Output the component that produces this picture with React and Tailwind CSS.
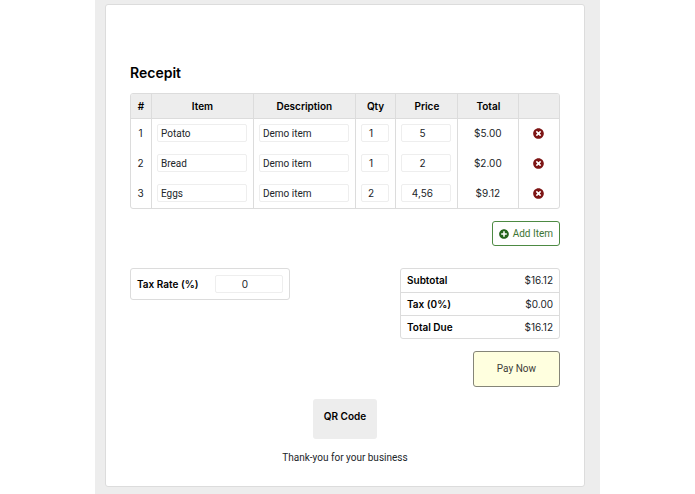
import React, { useState } from "react";
import { FaPlusCircle, FaTimesCircle } from "react-icons/fa";

const initialItems = [
  { id: 1, name: "Potato", description: "Demo item", qty: "1", price: "5" },
  { id: 2, name: "Bread", description: "Demo item", qty: "1", price: "2" },
  { id: 3, name: "Eggs", description: "Demo item", qty: "2", price: "4,56" },
];

const toNumber = (value) => Number(String(value).replace(",", ".")) || 0;
const lineTotal = (item) => toNumber(item.qty) * toNumber(item.price);
const money = (value) => `$${value.toFixed(2)}`;

const Field = ({ className = "", ...props }) => (
  <input
    type="text"
    className={`block h-[18px] w-full min-w-0 rounded-xs border border-[#eeeeee] bg-white text-[#212529] outline-none focus:border-gray-400 ${className}`}
    {...props}
  />
);

const App = () => {
  const [items, setItems] = useState(initialItems);
  const [taxRate, setTaxRate] = useState("0");

  const subtotal = items.reduce((sum, item) => sum + lineTotal(item), 0);
  const tax = (subtotal * toNumber(taxRate)) / 100;

  const summary = [
    { label: "Subtotal", value: subtotal },
    { label: `Tax (${toNumber(taxRate)}%)`, value: tax },
    { label: "Total Due", value: subtotal + tax },
  ];

  const updateItem = (id, key, value) => {
    setItems((prev) =>
      prev.map((item) => (item.id === id ? { ...item, [key]: value } : item))
    );
  };

  const removeItem = (id) => {
    setItems((prev) => prev.filter((item) => item.id !== id));
  };

  const addItem = () => {
    setItems((prev) => [
      ...prev,
      { id: Date.now(), name: "", description: "", qty: "1", price: "0" },
    ]);
  };

  return (
    <div className="min-h-screen bg-white font-['Inter',sans-serif] text-[10px] leading-4 text-[#212529]">
      <div className="mx-auto min-h-screen max-w-[505px] bg-[#ededed] pt-1 pr-[15px] pb-[6px] pl-[10px]">
        <main className="rounded-[3px] border border-[#dcdcdc] bg-white px-6 pt-[58px] pb-5">
          <h1 className="mb-[10px] text-sm leading-5 font-semibold text-black">Recepit</h1>

          <div className="overflow-hidden rounded-[3px] border border-[#dcdcdc]">
            <table className="w-full table-fixed border-collapse text-center">
              <thead className="bg-[#ededed] text-black">
                <tr className="h-6 border-b border-[#dcdcdc] [&>th]:font-semibold [&>th+th]:border-l [&>th+th]:border-[#dcdcdc]">
                  <th className="w-[4.8%]">#</th>
                  <th className="w-[23.8%]">Item</th>
                  <th className="w-[23.8%]">Description</th>
                  <th className="w-[9.5%]">Qty</th>
                  <th className="w-[14.5%]">Price</th>
                  <th className="w-[14.2%]">Total</th>
                  <th aria-label="Remove" />
                </tr>
              </thead>
              <tbody>
                {items.map((item, index) => (
                  <tr
                    key={item.id}
                    className="h-[30px] [&>td]:pr-[6px] [&>td]:pl-[5px] [&>td+td]:border-l [&>td+td]:border-[#dcdcdc]"
                  >
                    <td>{index + 1}</td>
                    <td>
                      <Field
                        aria-label="Item"
                        className="px-[3px] font-['Roboto',sans-serif]"
                        value={item.name}
                        onChange={(e) => updateItem(item.id, "name", e.target.value)}
                      />
                    </td>
                    <td>
                      <Field
                        aria-label="Description"
                        className="px-[3px] font-['Roboto',sans-serif]"
                        value={item.description}
                        onChange={(e) => updateItem(item.id, "description", e.target.value)}
                      />
                    </td>
                    <td>
                      <Field
                        aria-label="Qty"
                        className="pr-2 text-center"
                        value={item.qty}
                        onChange={(e) => updateItem(item.id, "qty", e.target.value)}
                      />
                    </td>
                    <td>
                      <Field
                        aria-label="Price"
                        className="pr-2 text-center"
                        value={item.price}
                        onChange={(e) => updateItem(item.id, "price", e.target.value)}
                      />
                    </td>
                    <td>{money(lineTotal(item))}</td>
                    <td>
                      <button
                        type="button"
                        aria-label="Remove item"
                        className="mx-auto block cursor-pointer text-[#7d1515]"
                        onClick={() => removeItem(item.id)}
                      >
                        <FaTimesCircle size={11} />
                      </button>
                    </td>
                  </tr>
                ))}
              </tbody>
            </table>
          </div>

          <div className="mt-3 flex justify-end">
            <button
              type="button"
              className="flex h-[25px] cursor-pointer items-center gap-1 rounded-[3px] border border-[#4d8a43] px-[6px] font-['Roboto',sans-serif] text-[#3d7434]"
              onClick={addItem}
            >
              <FaPlusCircle size={10} className="text-[#24631b]" />
              Add Item
            </button>
          </div>

          <div className="mt-[22px] flex items-start justify-between gap-4">
            <div className="flex h-8 w-40 items-center justify-between rounded-[3px] border border-[#dcdcdc] px-[6px]">
              <label htmlFor="tax-rate" className="font-semibold text-black">
                Tax Rate (%)
              </label>
              <div className="w-[68px]">
                <Field
                  id="tax-rate"
                  className="pr-2 text-center"
                  value={taxRate}
                  onChange={(e) => setTaxRate(e.target.value)}
                />
              </div>
            </div>

            <div className="w-40 rounded-[3px] border border-[#dcdcdc]">
              <table className="w-full border-collapse">
                <tbody>
                  {summary.map((row) => (
                    <tr key={row.label} className="h-[23px] border-[#dcdcdc] not-first:border-t">
                      <th className="pl-[6px] text-left font-semibold text-black">{row.label}</th>
                      <td className="pr-[6px] text-right">{money(row.value)}</td>
                    </tr>
                  ))}
                </tbody>
              </table>
            </div>
          </div>

          <div className="mt-3 flex justify-end">
            <button
              type="button"
              className="h-9 cursor-pointer rounded-[3px] border border-[#858578] bg-[#ffffdf] px-[23px] font-['Roboto',sans-serif] text-[#40403a]"
            >
              Pay Now
            </button>
          </div>

          {/* Footer */}
          <div className="mt-3 flex flex-col items-center gap-[11px]">
            <div className="h-10 rounded-[3px] bg-[#ededed] px-[11px] pt-[9px] font-semibold text-black">
              QR Code
            </div>
            <p className="font-['Roboto',sans-serif]">Thank-you for your business</p>
          </div>
        </main>
      </div>
    </div>
  );
};

export default App;
